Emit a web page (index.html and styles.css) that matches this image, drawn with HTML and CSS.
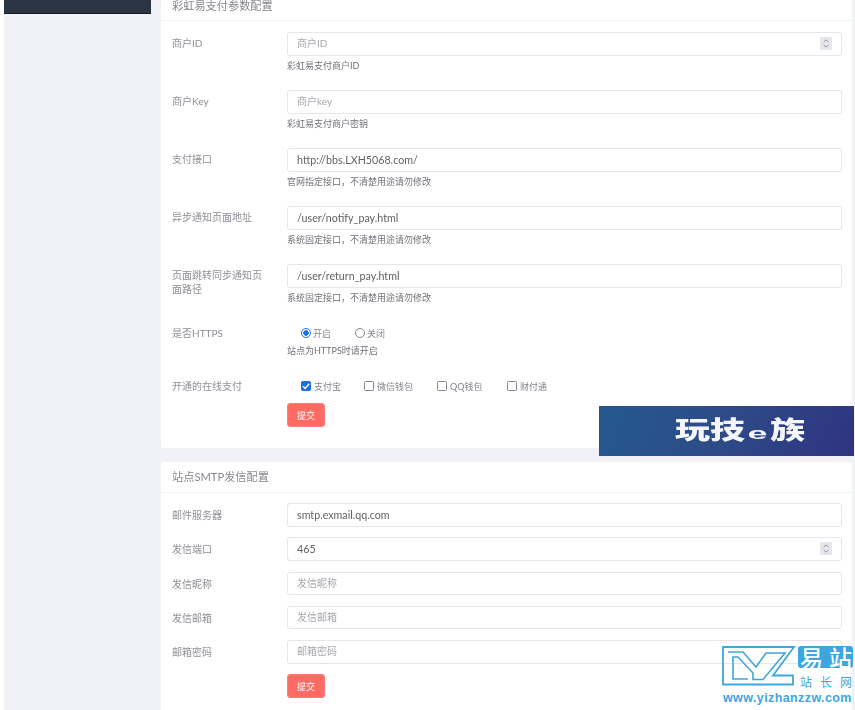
FILE: index.html
```html
<!DOCTYPE html>
<html lang="zh">
<head>
<meta charset="utf-8">
<title>支付配置</title>
<link rel="stylesheet" href="styles.css">
</head>
<body>
<div class="layout">
  <aside class="sidebar"><div class="side-end"></div></aside>
  <main class="main">
    <section class="card card-pay">
      <h2 class="card-title">彩虹易支付参数配置</h2>
      <div class="card-body">
        <div class="row row-tall">
          <label class="label">商户ID</label>
          <div class="field">
            <div class="input ph">商户ID<span class="spin"><svg viewBox="0 0 12 14" width="12" height="13"><path d="M3.500 5.500 6 3l2.500 2.500M3.500 8.500 6 11l2.500-2.500" fill="none" stroke="#8b8b94" stroke-width="1"/></svg></span></div>
            <p class="help">彩虹易支付商户ID</p>
          </div>
        </div>
        <div class="row row-tall">
          <label class="label">商户Key</label>
          <div class="field">
            <div class="input ph">商户key</div>
            <p class="help">彩虹易支付商户密钥</p>
          </div>
        </div>
        <div class="row row-tall">
          <label class="label">支付接口</label>
          <div class="field">
            <div class="input">http://bbs.LXH5068.com/</div>
            <p class="help">官网指定接口，不清楚用途请勿修改</p>
          </div>
        </div>
        <div class="row row-tall">
          <label class="label">异步通知页面地址</label>
          <div class="field">
            <div class="input">/user/notify_pay.html</div>
            <p class="help">系统固定接口，不清楚用途请勿修改</p>
          </div>
        </div>
        <div class="row row-tall">
          <label class="label label-wrap">页面跳转同步通知页面路径</label>
          <div class="field">
            <div class="input">/user/return_pay.html</div>
            <p class="help">系统固定接口，不清楚用途请勿修改</p>
          </div>
        </div>
        <div class="row row-radio">
          <label class="label label-flat">是否HTTPS</label>
          <div class="field">
            <div class="options">
              <span class="opt opt-radio"><i class="radio on"></i>开启</span>
              <span class="opt opt-radio"><i class="radio"></i>关闭</span>
            </div>
            <p class="help help-radio">站点为HTTPS时请开启</p>
          </div>
        </div>
        <div class="row row-check">
          <label class="label label-flat">开通的在线支付</label>
          <div class="field">
            <div class="options">
              <span class="opt opt-check w1"><i class="check on"><svg viewBox="0 0 10 10" width="10" height="10"><path d="M2 5.200 4.200 7.500 8.200 2.800" fill="none" stroke="#fff" stroke-width="1.500"/></svg></i>支付宝</span>
              <span class="opt opt-check w2"><i class="check"></i>微信钱包</span>
              <span class="opt opt-check w3"><i class="check"></i>QQ钱包</span>
              <span class="opt opt-check"><i class="check"></i>财付通</span>
            </div>
            <button class="btn" type="button">提交</button>
          </div>
        </div>
      </div>
    </section>
    <section class="card card-smtp">
      <h2 class="card-title">站点SMTP发信配置</h2>
      <div class="card-body smtp-body">
        <div class="row row-s"><label class="label">邮件服务器</label><div class="field"><div class="input">smtp.exmail.qq.com</div></div></div>
        <div class="row row-s"><label class="label">发信端口</label><div class="field"><div class="input">465<span class="spin"><svg viewBox="0 0 12 14" width="12" height="13"><path d="M3.500 5.500 6 3l2.500 2.500M3.500 8.500 6 11l2.500-2.500" fill="none" stroke="#8b8b94" stroke-width="1"/></svg></span></div></div></div>
        <div class="row row-s"><label class="label">发信昵称</label><div class="field"><div class="input ph">发信昵称</div></div></div>
        <div class="row row-s"><label class="label">发信邮箱</label><div class="field"><div class="input ph">发信邮箱</div></div></div>
        <div class="row row-s"><label class="label">邮箱密码</label><div class="field"><div class="input ph">邮箱密码</div></div></div>
        <div class="row"><span class="label"></span><div class="field"><button class="btn btn-s" type="button">提交</button></div></div>
      </div>
    </section>
  </main>
</div>

<div class="banner">
  <span class="banner-text">玩技<em>e</em>族</span>
</div>

<div class="wm">
  <div class="wm-top">
    <svg class="wm-logo" viewBox="0 0 74 40" width="74" height="40">
      <path d="M1 1H72L51 29.500H71V38.500H1Z" fill="none" stroke="#3ea6df" stroke-width="1.800"/>
      <path d="M6 6H21L34 21 44 7H63L41 33.500H31V27L16 11H11V33H26" fill="none" stroke="#3ea6df" stroke-width="1.600"/>
    </svg>
    <div class="wm-side">
      <div class="wm-box"><span>易</span><span>站</span></div>
      <div class="wm-sub"><span>站</span><span>长</span><span>网</span></div>
    </div>
  </div>
  <div class="wm-url">www.yizhanzzw.com</div>
</div>
</body>
</html>
```
FILE: styles.css
```css
* { box-sizing: border-box; }
html, body { margin: 0; padding: 0; height: 100%; overflow: hidden; background: #fff; }
body {
  font-family: Lato, "Noto Sans CJK SC", sans-serif;
  font-size: 11px;
  color: #606266;
  padding-left: 4px;
}
.layout { display: flex; height: 710px; background: #f0f2f7; filter: blur(0.3px); }
.sidebar { width: 157px; flex: none; }
.side-end { width: 147px; height: 14px; background: #2a3543; border-bottom: 1px solid #141c26; }
.main { flex: none; width: 691px; }
.card { background: #fff; border-radius: 3px; }
.card-pay { height: 448px; }
.card-smtp { margin-top: 14px; height: 260px; }
.card-title {
  margin: 0;
  padding: 0 11px;
  height: 21px;
  font-size: 11.200px;
  font-weight: 400;
  line-height: 11px;
  color: #85878d;
  border-bottom: 1px solid #eef3f8;
}
.card-smtp .card-title { height: 31px; line-height: 30px; }
.card-body { padding: 11px 11px 0; }
.smtp-body { padding-top: 10px; }
.row { display: flex; }
.row-tall { height: 58px; }
.row-radio { height: 53px; margin-top: 2px; }
.row-s { height: 34.300px; }
.row-s .label { line-height: 25px; }
.label { width: 115px; flex: none; line-height: 23px; color: #8e9096; font-size: 10px; }
.label-wrap { line-height: 14px; padding: 4px 22px 0 0; }
.label-flat { line-height: 18px; }
.field { width: 555px; flex: none; }
.input {
  height: 23.500px;
  line-height: 21.500px;
  border: 1px solid #e4e6eb;
  border-radius: 3px;
  padding: 0 9px;
  position: relative;
  font-size: 10.700px;
  color: #606266;
}
.ph { color: #a6a8ae; font-size: 10px; }
.spin {
  position: absolute;
  right: 9px;
  top: 4px;
  width: 12px;
  height: 13px;
  background: #e6e7ec;
  display: flex;
}
.help { margin: 3.500px 0 0; line-height: 13px; font-size: 9px; color: #6f7177; }
.help-radio { margin-top: 2px; }
.options { display: flex; padding-left: 14px; height: 18px; align-items: center; }
.opt { display: flex; align-items: center; font-size: 9px; color: #83858c; white-space: nowrap; }
.opt-radio { width: 54px; }
.opt-check { width: 64px; }
.w1 { width: 63px; }
.w2 { width: 73px; }
.w3 { width: 70px; }
.radio { width: 10px; height: 10px; border: 1px solid #85858f; border-radius: 50%; margin-right: 2px; }
.radio.on { border-color: #1a6fe8; background: radial-gradient(circle, #1a6fe8 0 2.500px, #fff 3px); }
.check { width: 10px; height: 10px; border: 1px solid #85858f; border-radius: 1.500px; margin-right: 3px; display: flex; align-items: center; justify-content: center; }
.check.on { background: #1a6fe8; border-color: #1a6fe8; }
.check svg { flex: none; }
.btn {
  display: block;
  margin-top: 8px;
  width: 38px;
  height: 24px;
  padding: 0;
  background: #ff6b63;
  border: 1px solid #ff7f78;
  border-radius: 3px;
  color: #fff;
  font-family: inherit;
  font-size: 9px;
}
.btn-s { margin-top: 0; }
.banner {
  position: absolute;
  left: 599px;
  top: 406px;
  width: 255px;
  height: 50px;
  background: linear-gradient(115deg, #24598e 0%, #2e4a87 50%, #2f3381 100%);
  display: flex;
  align-items: center;
  padding-left: 76px;
}
.banner-text {
  color: #f4f6fb;
  font-family: "Noto Sans CJK SC", sans-serif;
  font-size: 25px;
  font-weight: 900;
  line-height: 28px;
  white-space: nowrap;
  transform: scaleX(1.400);
  transform-origin: left center;
  filter: blur(0.3px);
}
.banner-text em {
  font-style: normal;
  font-family: "Liberation Sans", sans-serif;
  font-size: 16px;
  font-weight: 700;
  display: inline-block;
  width: 18px;
  text-align: center;
  transform: scaleX(1.600);
}
.wm {
  position: absolute;
  left: 720px;
  top: 645px;
  width: 135px;
  height: 63px;
  color: #3ea6df;
}
.wm-top { display: flex; height: 45px; padding-left: 2px; padding-top: 1px; }
.wm-logo { flex: none; }
.wm-side { margin-left: 2px; width: 55px; }
.wm-box {
  display: flex;
  justify-content: space-between;
  background: #3ea6df;
  color: #fff;
  font-family: "Noto Sans CJK SC", sans-serif;
  font-size: 23px;
  font-weight: 500;
  line-height: 22px;
  height: 22px;
  border-radius: 3px;
  padding: 0 1px 0 2px;
}
.wm-sub {
  display: flex;
  justify-content: space-between;
  font-family: "Noto Sans CJK SC", sans-serif;
  font-size: 12px;
  line-height: 17px;
  margin-top: 5px;
  padding: 0 1px 0 2px;
}
.wm-url {
  font-family: "Liberation Sans", sans-serif;
  font-weight: 700;
  font-size: 12.500px;
  line-height: 16px;
  letter-spacing: 0.400px;
  padding-left: 3px;
  white-space: nowrap;
}
```
